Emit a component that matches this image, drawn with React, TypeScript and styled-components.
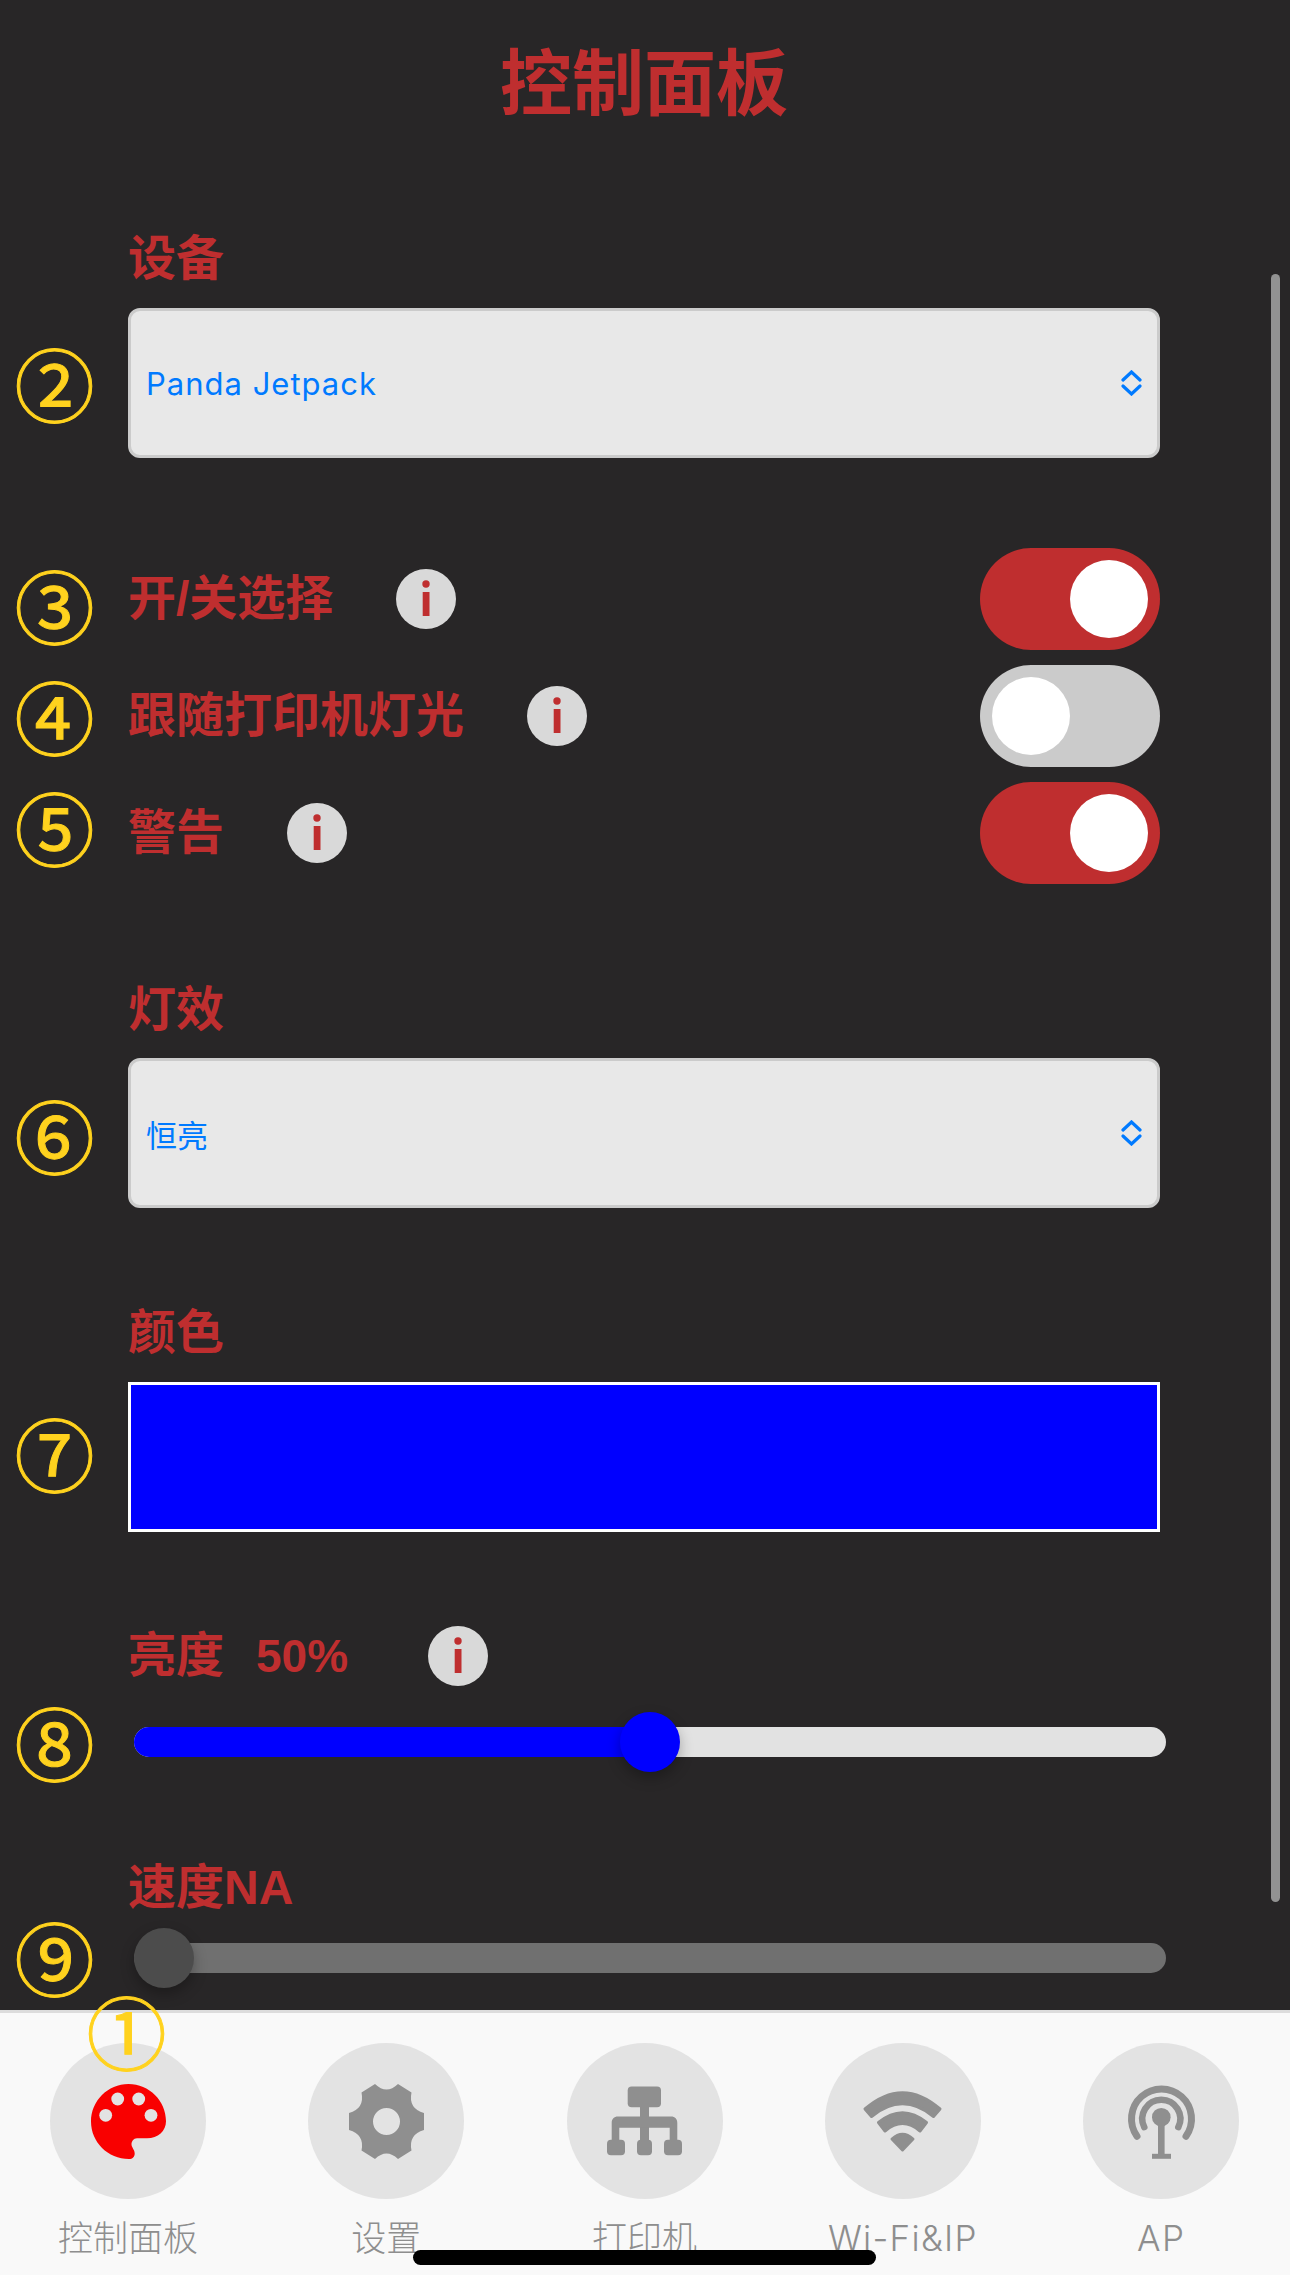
import React from "react";
import styled, { createGlobalStyle } from "styled-components";

const RED = "#bf2e2f";
const CJK = '"Liberation Sans", "Noto Sans CJK SC", sans-serif';

const Global = createGlobalStyle`
  html, body { margin: 0; padding: 0; background: #282627; }
  * { box-sizing: border-box; }
`;

const Page = styled.div`
  position: relative;
  width: 1290px;
  height: 2275px;
  overflow: hidden;
  display: flex;
  flex-direction: column;
  background: #282627;
  font-family: ${CJK};
`;

const Main = styled.main`
  flex: 0 0 2010px;
  padding: 34px 130px 0 128px;
  display: flex;
  flex-direction: column;
`;

const Title = styled.h1`
  margin: 0 0 94px;
  height: 100px;
  line-height: 100px;
  font-size: 72px;
  font-weight: 700;
  text-align: center;
  color: ${RED};
`;

const Section = styled.section<{ $top?: number; $gap?: number }>`
  margin-top: ${(p) => p.$top ?? 0}px;
  display: flex;
  flex-direction: column;
  gap: ${(p) => p.$gap ?? 20}px;
`;

const LabelRow = styled.div<{ $nudge?: number }>`
  display: flex;
  align-items: center;
  height: 60px;
  padding-top: ${(p) => p.$nudge ?? 0}px;
`;

const Label = styled.span`
  font-size: 48px;
  line-height: 60px;
  font-weight: 700;
  color: ${RED};
  white-space: nowrap;
`;

const Percent = styled(Label)`
  margin-left: 32px;
  font-size: 46px;
`;

const Select = styled.div`
  height: 150px;
  display: flex;
  align-items: center;
  justify-content: space-between;
  padding: 0 15px 0 15px;
  background: #e8e8e8;
  border: 3px solid #cbcbcb;
  border-radius: 12px;
  color: #007aff;
`;

const SelectText = styled.span`
  font-family: Inter, "Noto Sans CJK SC", sans-serif;
  font-size: 31px;
  letter-spacing: 1px;
`;

const SelectCjk = styled(SelectText)`
  letter-spacing: 0;
`;

const ToggleList = styled.div`
  margin-top: 90px;
  display: flex;
  flex-direction: column;
  gap: 15px;
`;

const ToggleRow = styled.div`
  height: 102px;
  display: flex;
  align-items: center;
  justify-content: space-between;
`;

const ToggleLabel = styled.div`
  display: flex;
  align-items: center;
`;

const Track = styled.div<{ $on: boolean }>`
  width: 180px;
  height: 102px;
  padding: 12px;
  border-radius: 51px;
  display: flex;
  justify-content: ${(p) => (p.$on ? "flex-end" : "flex-start")};
  background: ${(p) => (p.$on ? RED : "#cbcbcb")};
`;

const Knob = styled.div`
  width: 78px;
  height: 78px;
  border-radius: 50%;
  background: #fff;
`;

const InfoBadge = styled.span<{ $gap: number }>`
  margin-left: ${(p) => p.$gap}px;
  flex: none;
  width: 60px;
  height: 60px;
  border-radius: 50%;
  background: #d9d9d9;
  display: flex;
`;

const Swatch = styled.div`
  height: 150px;
  background: #0000ff;
  border: 3px solid #fff;
`;

const Slider = styled.div`
  position: relative;
  width: 1032px;
  height: 60px;
  margin-left: 6px;
  display: flex;
  align-items: center;
`;

const Rail = styled.div<{ $disabled?: boolean }>`
  width: 100%;
  height: 30px;
  border-radius: 15px;
  overflow: hidden;
  background: ${(p) => (p.$disabled ? "#707070" : "#e2e2e2")};
`;

const Fill = styled.div`
  height: 100%;
  background: #0000ff;
`;

const Thumb = styled.div<{ $disabled?: boolean }>`
  position: absolute;
  top: 0;
  width: 60px;
  height: 60px;
  border-radius: 50%;
  background: ${(p) => (p.$disabled ? "#4c4c4c" : "#0000ff")};
  box-shadow: 0 6px 14px rgba(0, 0, 0, 0.28);
`;

const ScrollBar = styled.div`
  position: absolute;
  left: 1271px;
  top: 274px;
  width: 9px;
  height: 1628px;
  border-radius: 5px;
  background: #929292;
`;

const TabBar = styled.nav`
  flex: 1;
  border-top: 3px solid #dcdcdc;
  background: #f9f9f9;
  padding-top: 30px;
`;

const Tabs = styled.div`
  display: grid;
  grid-template-columns: repeat(5, 258.25px);
  margin-left: -1px;
`;

const Tab = styled.div`
  display: flex;
  flex-direction: column;
  align-items: center;
  gap: 17px;
`;

const TabCircle = styled.div`
  width: 156px;
  height: 156px;
  border-radius: 50%;
  background: #e3e3e3;
  display: flex;
  align-items: center;
  justify-content: center;
`;

const TabLabel = styled.span<{ $spacing?: number }>`
  font-family: Inter, "Noto Sans CJK SC", sans-serif;
  font-size: 35px;
  line-height: 44px;
  font-weight: 300;
  letter-spacing: ${(p) => p.$spacing ?? 0}px;
  color: #8e8e8e;
  white-space: nowrap;
`;

const HomeBar = styled.div`
  position: absolute;
  left: 413px;
  top: 2250px;
  width: 463px;
  height: 15px;
  border-radius: 8px;
  background: #000;
`;

const Marker = styled.span<{ $y: number; $x?: number }>`
  position: absolute;
  left: ${(p) => p.$x ?? 17}px;
  top: ${(p) => p.$y - 53}px;
  width: 75px;
  height: 100px;
  display: flex;
  align-items: center;
  justify-content: center;
  font-family: "Noto Sans CJK SC", sans-serif;
  font-size: 80px;
  line-height: 100px;
  color: #ffd21e;
  -webkit-text-stroke: 1px #ffd21e;
`;

const Icon = styled.svg`
  width: 75px;
  height: 75px;
  overflow: visible;
  display: block;
`;

const InfoIcon = () => (
  <svg width="60" height="60" viewBox="0 0 60 60">
    <circle cx="30" cy="15" r="3.7" fill={RED} />
    <rect x="26.7" y="23" width="6.8" height="24" fill={RED} />
  </svg>
);

const Chevrons = () => (
  <svg width="21" height="26" viewBox="0 0 21 26" fill="none" stroke="#007aff" strokeWidth="3.2" strokeLinecap="round">
    <path d="M2 10 L10.5 2 L19 10" />
    <path d="M2 16 L10.5 24 L19 16" />
  </svg>
);

const PaletteIcon = () => (
  <Icon viewBox="0 0 75 75">
    <path
      fill="#f90000"
      d="M37.5 0C58.2 0 75 16.8 75 37.3C75 47 67 54.3 56 54.3L46 54.3C42.5 54.3 40.5 57.5 40.5 60.5C40.5 63.5 43.7 65.5 43.7 69.5C43.7 73 41.5 75 38 75C17 75 0 58.2 0 37.5C0 16.8 16.8 0 37.5 0Z"
    />
    <g fill="#e3e3e3">
      <circle cx="26.7" cy="15" r="6.4" />
      <circle cx="47.7" cy="15" r="6.4" />
      <circle cx="14.7" cy="31.3" r="6.4" />
      <circle cx="60" cy="31.3" r="6.4" />
    </g>
  </Icon>
);

const GearIcon = () => (
  <Icon viewBox="0 0 75 75">
    <path
      fill="#8f8f8f"
      fillRule="evenodd"
      d="M26 0Q37.5 11 49 0L62.5 8.5Q59.2 24.5 75 29L75 46Q59.2 50.5 62.5 66.5L49 75Q37.5 64 26 75L12.5 66.5Q15.8 50.5 0 46L0 29Q15.8 24.5 12.5 8.5ZM37.5 24A13.5 13.5 0 1 0 37.5 51A13.5 13.5 0 1 0 37.5 24Z"
    />
  </Icon>
);

const NetworkIcon = () => (
  <Icon viewBox="0 0 75 75">
    <g fill="#8f8f8f">
      <rect x="20.7" y="2.5" width="33.3" height="20.7" rx="4" />
      <rect x="33" y="22" width="9" height="36" />
      <path d="M4.7 58V39C4.7 35 7 32.5 11 32.5H64C68 32.5 70.3 35 70.3 39V58H62.7V43.8H12.3V58Z" />
      <rect x="0" y="55.8" width="18" height="15.4" rx="4" />
      <rect x="30" y="55.8" width="15" height="15.4" rx="4" />
      <rect x="57" y="55.8" width="18" height="15.4" rx="4" />
    </g>
  </Icon>
);

const WifiIcon = () => (
  <Icon viewBox="0 0 75 75">
    <g fill="#8f8f8f" stroke="#8f8f8f" strokeWidth="3" strokeLinejoin="round">
      <path d="M0 25Q37.5 -7.5 75 25L68.5 32.5Q37.5 7 6.5 32.5Z" />
      <path d="M13.5 38.5Q37.5 19 61.5 38.5L55 47Q37.5 32 20 47Z" />
      <path d="M27 55Q37.5 45.5 48 55L37.5 66Z" />
    </g>
  </Icon>
);

const AntennaIcon = () => (
  <Icon viewBox="0 0 75 75">
    <g fill="none" stroke="#8f8f8f" strokeLinecap="round">
      <path strokeWidth="7" d="M13 52.2A30 30 0 1 1 62 52.2" />
      <path strokeWidth="6.5" d="M20.3 43.2A19 19 0 1 1 54.3 43.2" />
    </g>
    <g fill="#8f8f8f">
      <circle cx="37.3" cy="33.2" r="9.3" />
      <rect x="34" y="40" width="6.6" height="31" />
      <rect x="28" y="69.8" width="19" height="5" />
    </g>
  </Icon>
);

const toggles = [
  { label: "开/关选择", on: true },
  { label: "跟随打印机灯光", on: false },
  { label: "警告", on: true },
];

const tabs = [
  { label: "控制面板", icon: <PaletteIcon /> },
  { label: "设置", icon: <GearIcon /> },
  { label: "打印机", icon: <NetworkIcon /> },
  { label: "Wi-Fi&IP", icon: <WifiIcon />, spacing: 1.3 },
  { label: "AP", icon: <AntennaIcon />, spacing: 1.3 },
];

const markers: { glyph: string; y: number; x?: number }[] = [
  { glyph: "②", y: 384 },
  { glyph: "③", y: 606 },
  { glyph: "④", y: 717 },
  { glyph: "⑤", y: 828 },
  { glyph: "⑥", y: 1136 },
  { glyph: "⑦", y: 1454 },
  { glyph: "⑧", y: 1743 },
  { glyph: "⑨", y: 1958 },
  { glyph: "①", y: 2032, x: 89 },
];

const thumbLeft = (pct: number) => `${(pct / 100) * (1032 - 60)}px`;

export default function App() {
  const brightness = 50;
  return (
    <Page>
      <Global />
      <Main>
        <Title>控制面板</Title>
        <Section>
          <LabelRow $nudge={2}>
            <Label>设备</Label>
          </LabelRow>
          <Select>
            <SelectText>Panda Jetpack</SelectText>
            <Chevrons />
          </Select>
        </Section>

        <ToggleList>
          {toggles.map((t) => (
            <ToggleRow key={t.label}>
              <ToggleLabel>
                <Label>{t.label}</Label>
                <InfoBadge $gap={63}>
                  <InfoIcon />
                </InfoBadge>
              </ToggleLabel>
              <Track $on={t.on}>
                <Knob />
              </Track>
            </ToggleRow>
          ))}
        </ToggleList>

        <Section $top={94}>
          <LabelRow $nudge={4}>
            <Label>灯效</Label>
          </LabelRow>
          <Select>
            <SelectCjk>恒亮</SelectCjk>
            <Chevrons />
          </Select>
        </Section>

        <Section $top={94}>
          <LabelRow $nudge={2}>
            <Label>颜色</Label>
          </LabelRow>
          <Swatch />
        </Section>

        <Section $top={94} $gap={26}>
          <LabelRow>
            <Label>亮度</Label>
            <Percent>{brightness}%</Percent>
            <InfoBadge $gap={80}>
              <InfoIcon />
            </InfoBadge>
          </LabelRow>
          <Slider>
            <Rail>
              <Fill style={{ width: `calc(${thumbLeft(brightness)} + 30px)` }} />
            </Rail>
            <Thumb style={{ left: thumbLeft(brightness) }} />
          </Slider>
        </Section>

        <Section $top={86} $gap={10}>
          <LabelRow>
            <Label>速度NA</Label>
          </LabelRow>
          <Slider>
            <Rail $disabled />
            <Thumb $disabled style={{ left: thumbLeft(0) }} />
          </Slider>
        </Section>
      </Main>

      <ScrollBar />

      <TabBar>
        <Tabs>
          {tabs.map((t) => (
            <Tab key={t.label}>
              <TabCircle>{t.icon}</TabCircle>
              <TabLabel $spacing={t.spacing}>{t.label}</TabLabel>
            </Tab>
          ))}
        </Tabs>
      </TabBar>

      <HomeBar />
      {markers.map((m) => (
        <Marker key={m.glyph} $y={m.y} $x={m.x}>
          {m.glyph}
        </Marker>
      ))}
    </Page>
  );
}
